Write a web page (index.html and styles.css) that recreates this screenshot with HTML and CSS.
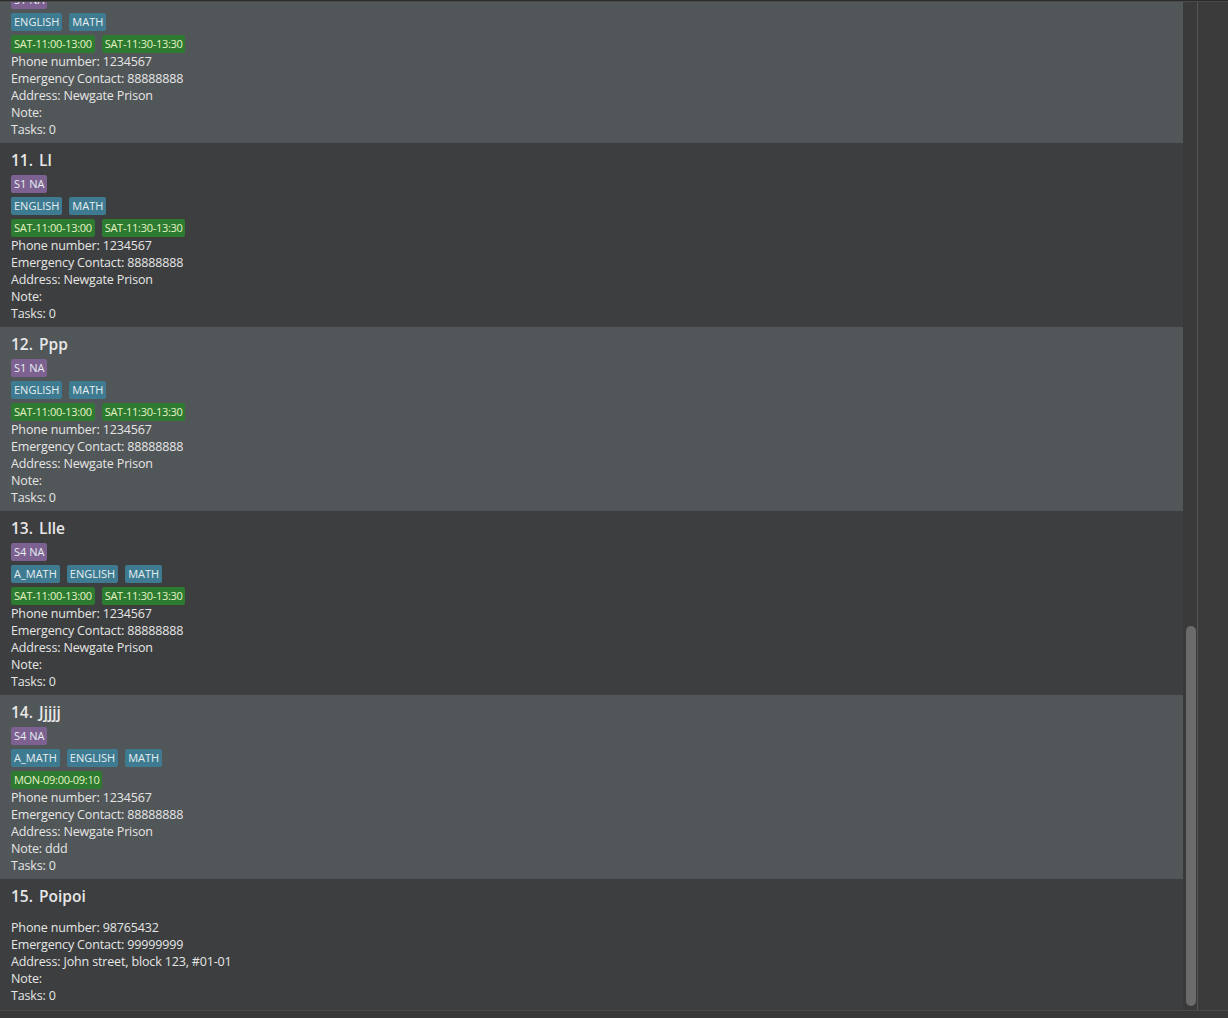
FILE: index.html
```html
<!DOCTYPE html>
<html>
    <head>
        <title>Tutor List</title>
        <link rel="stylesheet" href="styles.css">
    </head>
    <body>
        <div class="window">
            <div class="topEdge"></div>

            <div class="main">
                <!-- person list, scrolled down to the end -->
                <div class="listPane">
                    <div class="list">

                        <div class="card odd">
                            <div class="name">10. Kk</div>
                            <div class="tagRow"><span class="tag level">S1 NA</span></div>
                            <div class="tagRow"><span class="tag subject">ENGLISH</span><span class="tag subject">MATH</span></div>
                            <div class="tagRow"><span class="tag slot">SAT-11:00-13:00</span><span class="tag slot">SAT-11:30-13:30</span></div>
                            <div class="info">Phone number: 1234567</div>
                            <div class="info">Emergency Contact: 88888888</div>
                            <div class="info">Address: Newgate Prison</div>
                            <div class="info">Note: </div>
                            <div class="info">Tasks: 0</div>
                        </div>

                        <div class="card even">
                            <div class="name">11. Ll</div>
                            <div class="tagRow"><span class="tag level">S1 NA</span></div>
                            <div class="tagRow"><span class="tag subject">ENGLISH</span><span class="tag subject">MATH</span></div>
                            <div class="tagRow"><span class="tag slot">SAT-11:00-13:00</span><span class="tag slot">SAT-11:30-13:30</span></div>
                            <div class="info">Phone number: 1234567</div>
                            <div class="info">Emergency Contact: 88888888</div>
                            <div class="info">Address: Newgate Prison</div>
                            <div class="info">Note: </div>
                            <div class="info">Tasks: 0</div>
                        </div>

                        <div class="card odd">
                            <div class="name">12. Ppp</div>
                            <div class="tagRow"><span class="tag level">S1 NA</span></div>
                            <div class="tagRow"><span class="tag subject">ENGLISH</span><span class="tag subject">MATH</span></div>
                            <div class="tagRow"><span class="tag slot">SAT-11:00-13:00</span><span class="tag slot">SAT-11:30-13:30</span></div>
                            <div class="info">Phone number: 1234567</div>
                            <div class="info">Emergency Contact: 88888888</div>
                            <div class="info">Address: Newgate Prison</div>
                            <div class="info">Note: </div>
                            <div class="info">Tasks: 0</div>
                        </div>

                        <div class="card even">
                            <div class="name">13. Llle</div>
                            <div class="tagRow"><span class="tag level">S4 NA</span></div>
                            <div class="tagRow"><span class="tag subject">A_MATH</span><span class="tag subject">ENGLISH</span><span class="tag subject">MATH</span></div>
                            <div class="tagRow"><span class="tag slot">SAT-11:00-13:00</span><span class="tag slot">SAT-11:30-13:30</span></div>
                            <div class="info">Phone number: 1234567</div>
                            <div class="info">Emergency Contact: 88888888</div>
                            <div class="info">Address: Newgate Prison</div>
                            <div class="info">Note: </div>
                            <div class="info">Tasks: 0</div>
                        </div>

                        <div class="card odd">
                            <div class="name">14. Jjjjj</div>
                            <div class="tagRow"><span class="tag level">S4 NA</span></div>
                            <div class="tagRow"><span class="tag subject">A_MATH</span><span class="tag subject">ENGLISH</span><span class="tag subject">MATH</span></div>
                            <div class="tagRow"><span class="tag slot">MON-09:00-09:10</span></div>
                            <div class="info">Phone number: 1234567</div>
                            <div class="info">Emergency Contact: 88888888</div>
                            <div class="info">Address: Newgate Prison</div>
                            <div class="info">Note: ddd</div>
                            <div class="info">Tasks: 0</div>
                        </div>

                        <div class="card even last">
                            <div class="name">15. Poipoi</div>
                            <div class="tagRow"></div>
                            <div class="tagRow"></div>
                            <div class="tagRow"></div>
                            <div class="info">Phone number: 98765432</div>
                            <div class="info">Emergency Contact: 99999999</div>
                            <div class="info">Address: John street, block 123, #01-01</div>
                            <div class="info">Note: </div>
                            <div class="info">Tasks: 0</div>
                        </div>

                    </div>
                </div>

                <!-- scroll bar -->
                <div class="scrollTrack">
                    <div class="thumb"></div>
                </div>
                <div class="side"></div>
            </div>

            <div class="bottomEdge"></div>
        </div>
    </body>
</html>
```

FILE: styles.css
```css
 body{
     margin: 0;
     background-color: #383838;
     font-family: 'Open Sans', 'Noto Sans', sans-serif;
 }

 .window{
     display: flex;
     flex-direction: column;
     height: 1018px;
     overflow: hidden;
 }

 .topEdge{
     height: 1px;
     background-color: #2a2a2a;
     border-bottom: 1px solid #4a4a4a;
 }

 .main{
     display: flex;
     height: 1008px;
 }

 /* List */

 .listPane{
     width: 1183px;
     overflow: hidden;
 }

 .list{
     margin-top: -43px;
 }

 .card{
     padding: 6px 11px 5px;
 }

 .last{
     padding-bottom: 6px;
 }

 .odd{
     background-color: #515658;
 }

 .even{
     background-color: #3c3e3f;
 }

 .name{
     color: #e8e8e8;
     font-size: 15.5px;
     font-weight: 600;
     line-height: 22px;
     word-spacing: 2px;
 }

 .tagRow{
     display: flex;
     gap: 7px;
     padding-top: 4px;
 }

 .tag{
     font-size: 11px;
     line-height: 18px;
     padding: 0 3px;
     border-radius: 2px;
     color: #e6eef2;
 }

 .level{
     background-color: #7d6190;
 }

 .subject{
     background-color: #3e7b91;
 }

 .slot{
     background-color: #2d7a31;
     color: #e4f4c4;
     letter-spacing: -0.3px;
 }

 .info{
     color: #e6e6e6;
     font-size: 12.5px;
     letter-spacing: -0.15px;
     line-height: 17px;
 }

 /* Scroll bar */

 .scrollTrack{
     width: 15px;
     background-color: #3a3a3a;
     border-right: 1px solid #555555;
     display: flex;
     flex-direction: column;
     justify-content: flex-end;
     align-items: center;
     padding-bottom: 4px;
     box-sizing: border-box;
 }

 .thumb{
     width: 10px;
     height: 380px;
     margin-left: 2px;
     background-color: #6b6b6b;
     border-radius: 5px;
 }

 .side{
     flex: 1;
     background-color: #3b3b3b;
 }

 .bottomEdge{
     flex: 1;
     background-color: #383838;
     border-top: 1px solid #4a4a4a;
 }
```
